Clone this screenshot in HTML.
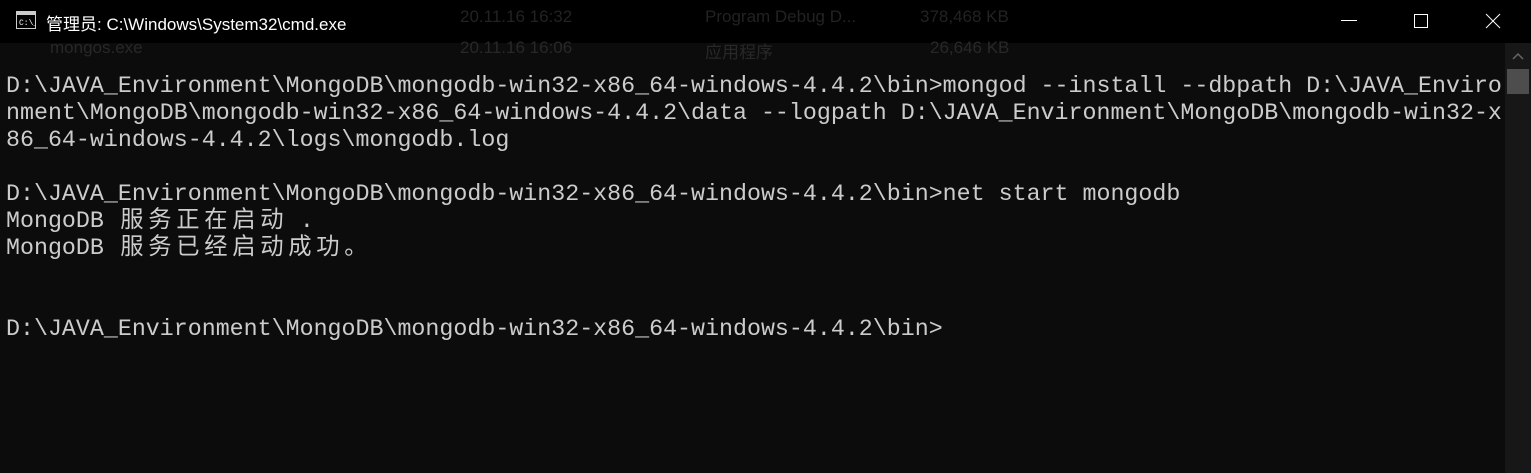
<!DOCTYPE html>
<html><head><meta charset="utf-8"><style>
html,body{margin:0;padding:0;width:1531px;height:473px;overflow:hidden;background:#0c0c0c}
#title{position:absolute;left:0;top:0;width:1531px;height:43px;background:#000}
.tt{position:absolute;left:46px;top:10px;font:17px "Liberation Sans","Noto Sans CJK SC",sans-serif;color:#fff;white-space:nowrap}
.ghost{position:absolute;font:17px "Liberation Sans","Noto Sans CJK SC",sans-serif;color:#222;white-space:nowrap}
pre{position:absolute;left:6px;top:73px;margin:0;font:23.3px/27px "Liberation Mono","Noto Sans CJK SC",monospace;color:#cccccc}
.c{display:inline-block;width:28px;text-align:center}
#sb{position:absolute;left:1505px;top:43px;width:26px;height:430px;background:#171717}
#thumb{position:absolute;left:1507px;top:69px;width:22px;height:25px;background:#4d4d4d}
</style></head><body>
<div id="title"></div>
<div class="ghost" style="left:460px;top:7px">20.11.16 16:32</div>
<div class="ghost" style="left:705px;top:7px">Program Debug D...</div>
<div class="ghost" style="left:920px;top:7px">378,468 KB</div>
<div class="ghost" style="left:50px;top:38px;color:#282828">mongos.exe</div>
<div class="ghost" style="left:460px;top:38px;color:#282828">20.11.16 16:06</div>
<div class="ghost" style="left:705px;top:38px;color:#282828">应用程序</div>
<div class="ghost" style="left:930px;top:38px;color:#282828">26,646 KB</div>
<svg style="position:absolute;left:16px;top:11px" width="20" height="18"><rect x="0.5" y="0.5" width="19" height="17" fill="#000" stroke="#ccc"/><rect x="1" y="1" width="18" height="3" fill="#ccc"/><text x="3" y="14" font-size="8" fill="#fff" font-family="Liberation Mono">C:\_</text></svg>
<div class="tt">管理员: C:\Windows\System32\cmd.exe</div>
<svg style="position:absolute;left:1330px;top:8px" width="200" height="28">
<line x1="11" y1="12.5" x2="27" y2="12.5" stroke="#fff" stroke-width="1"/>
<rect x="84.5" y="6.5" width="13" height="13" fill="none" stroke="#fff"/>
<line x1="156" y1="6" x2="170" y2="20" stroke="#fff"/><line x1="170" y1="6" x2="156" y2="20" stroke="#fff"/>
</svg>
<div id="sb"></div>
<svg style="position:absolute;left:1511px;top:52px" width="14" height="10"><polyline points="2,7 7,2 12,7" fill="none" stroke="#666" stroke-width="1.5"/></svg>
<div id="thumb"></div>
<pre>D:\JAVA_Environment\MongoDB\mongodb-win32-x86_64-windows-4.4.2\bin>mongod --install --dbpath D:\JAVA_Enviro
nment\MongoDB\mongodb-win32-x86_64-windows-4.4.2\data --logpath D:\JAVA_Environment\MongoDB\mongodb-win32-x
86_64-windows-4.4.2\logs\mongodb.log

D:\JAVA_Environment\MongoDB\mongodb-win32-x86_64-windows-4.4.2\bin>net start mongodb
MongoDB <span class="c">服</span><span class="c">务</span><span class="c">正</span><span class="c">在</span><span class="c">启</span><span class="c">动</span> .
MongoDB <span class="c">服</span><span class="c">务</span><span class="c">已</span><span class="c">经</span><span class="c">启</span><span class="c">动</span><span class="c">成</span><span class="c">功</span><span class="c">。</span>


D:\JAVA_Environment\MongoDB\mongodb-win32-x86_64-windows-4.4.2\bin></pre>
</body></html>
